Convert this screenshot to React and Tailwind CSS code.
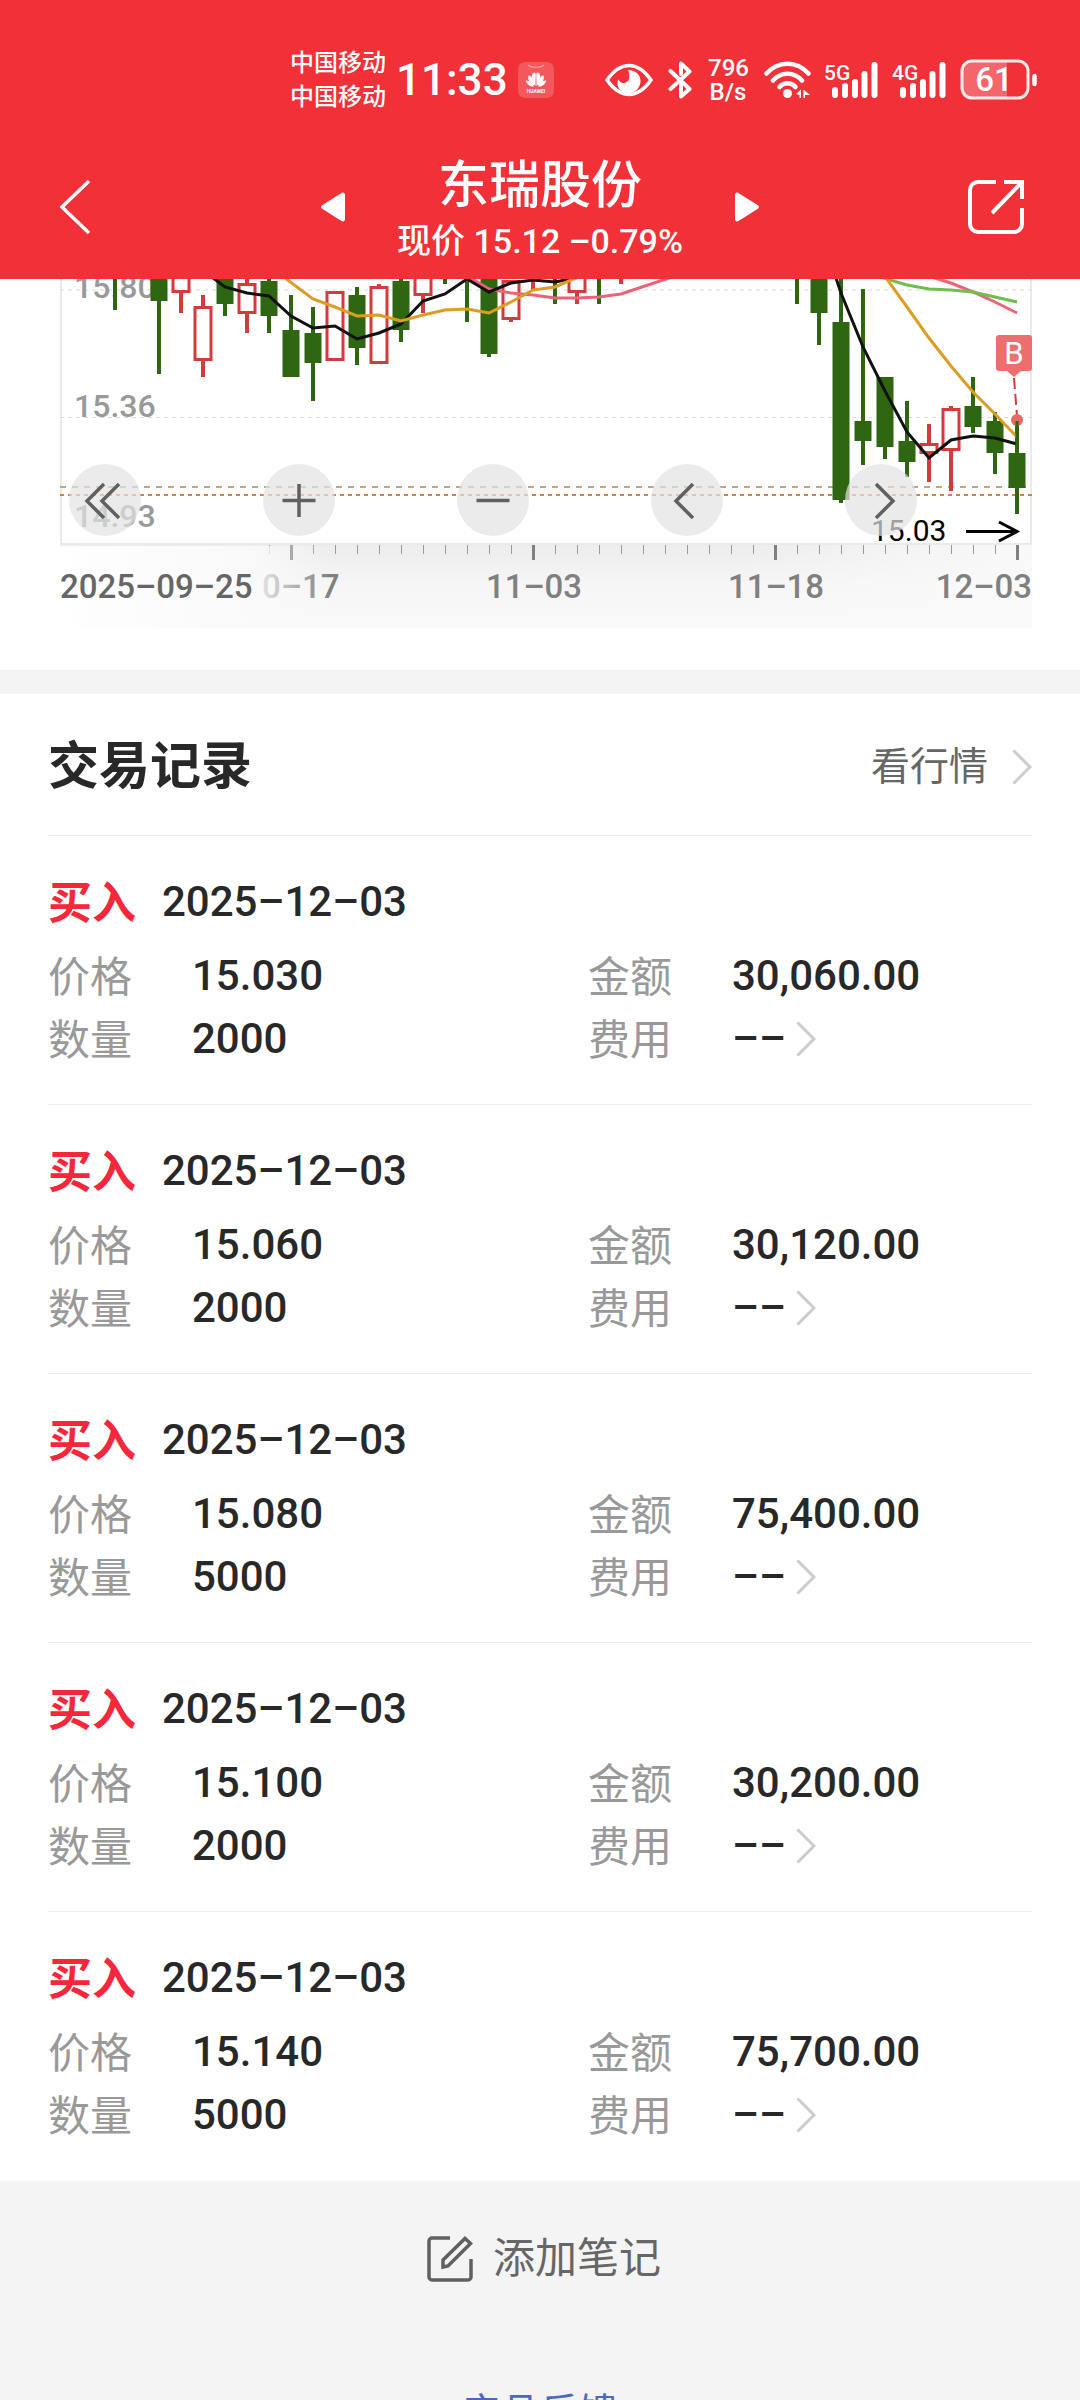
import React from 'react';

const trades = [
  { date: '2025–12–03', price: '15.030', amount: '30,060.00', count: '2000' },
  { date: '2025–12–03', price: '15.060', amount: '30,120.00', count: '2000' },
  { date: '2025–12–03', price: '15.080', amount: '75,400.00', count: '5000' },
  { date: '2025–12–03', price: '15.100', amount: '30,200.00', count: '2000' },
  { date: '2025–12–03', price: '15.140', amount: '75,700.00', count: '5000' },
];

// x, wick top, wick bottom, body top, body bottom, rising
const candles = [
  [115, 260, 310, 0, 0, false],
  [159, 260, 374, 260, 301, false],
  [181, 260, 313, 260, 293, true],
  [203, 295, 377, 306, 361, true],
  [225, 260, 316, 260, 304, false],
  [247, 260, 333, 283, 314, true],
  [269, 260, 333, 281, 316, false],
  [291, 295, 377, 330, 377, false],
  [313, 307, 401, 333, 363, false],
  [335, 291, 361, 291, 361, true],
  [357, 287, 365, 295, 348, false],
  [379, 284, 364, 286, 364, true],
  [401, 260, 342, 281, 330, false],
  [423, 260, 313, 260, 296, true],
  [445, 260, 284, 0, 0, false],
  [467, 260, 322, 0, 0, false],
  [489, 260, 357, 260, 354, false],
  [511, 280, 322, 280, 320, true],
  [533, 260, 290, 0, 0, true],
  [555, 260, 304, 0, 0, false],
  [577, 260, 304, 260, 293, true],
  [599, 260, 304, 0, 0, false],
  [621, 260, 284, 0, 0, true],
  [797, 260, 304, 0, 0, false],
  [819, 260, 345, 260, 313, false],
  [841, 260, 503, 322, 500, false],
  [863, 289, 465, 421, 441, false],
  [885, 377, 459, 377, 447, false],
  [907, 401, 477, 441, 462, false],
  [929, 424, 482, 443, 454, true],
  [951, 406, 491, 408, 451, true],
  [973, 377, 433, 406, 427, false],
  [995, 412, 474, 421, 453, false],
  [1017, 421, 514, 453, 488, false],
];

const averages = [
  ['#ea6478', '464,274 489,289 511,293 533,295 555,298 577,298 599,297 621,294 645,286 672,277'],
  ['#ea6478', '928,276 951,283 973,292 995,302 1017,313'],
  ['#6fbf4b', '880,277 907,285 929,289 951,290 973,292 995,297 1017,302'],
  ['#111', '205,272 225,287 247,293 269,296 291,316 313,328 335,326 357,339 379,333 401,324 423,301 445,294 467,279 489,292 511,283 533,280 555,282 580,277'],
  ['#111', '834,272 841,293 863,347 885,391 907,432 929,458 951,440 973,436 995,438 1017,444'],
  ['#dd9d22', '281,275 313,299 335,307 357,316 379,315 401,321 423,315 445,310 467,309 489,313 511,302 533,290 555,287 578,277'],
  ['#dd9d22', '884,275 907,307 929,338 951,366 973,392 995,414 1017,437'],
];

const ticks = Array.from({ length: 35 }, (_, i) => 269 + i * 22);
const majorTicks = [291, 533, 775, 1017];

const Candle = ({ data }) => {
  const [x, high, low, top, bottom, rising] = data;
  const color = rising ? '#d23c3c' : '#2e6612';
  return (
    <g>
      <line x1={x} x2={x} y1={high} y2={low} stroke={color} strokeWidth="4" />
      {bottom > 0 && (
        <rect
          x={rising ? x - 8 : x - 8.5}
          y={rising ? top + 1.5 : top}
          width={rising ? 16 : 17}
          height={rising ? bottom - top - 3 : bottom - top}
          fill={rising ? '#fff' : color}
          stroke={rising ? color : 'none'}
          strokeWidth="3"
        />
      )}
    </g>
  );
};

const Chevron = ({ className }) => (
  <svg viewBox="0 0 20 36" fill="none" className={className}>
    <path d="M1.5 1.5 18 18 1.5 34.5" stroke="#ccc" strokeWidth="3" />
  </svg>
);

const Signal = ({ label }) => (
  <svg viewBox="0 0 54 40" className="w-[54px] h-10 overflow-visible" fill="none">
    <text x="0" y="20" fontSize="21" fontWeight="500" fill="#fff">
      {label}
    </text>
    <path d="M11 30v5M21 26v9M31 22v13M40.5 14v21M50.5 5v30" stroke="#fff" strokeWidth="6" strokeLinecap="round" />
  </svg>
);

const StatusBar = () => (
  <div className="flex items-center justify-between h-[106px] pl-[290px] pr-[42px] pt-[54px]">
    <div className="flex items-center">
      <div className="text-2xl leading-[34px] font-medium whitespace-nowrap">
        <div>中国移动</div>
        <div>中国移动</div>
      </div>
      <div className="ml-[10px] text-[44px] leading-[48px] font-medium">11:33</div>
      <svg viewBox="0 0 36 36" className="w-9 h-9 ml-[10px]">
        <rect width="36" height="36" rx="7" fill="#f4585c" />
        <path d="M10 3c3 3 13 3 16 0" fill="none" stroke="#f9a3a0" strokeWidth="1.2" />
        <g fill="#fff">
          <path d="M17.5 24c-4-5-5-10-2.5-13 1.5-1 2.5-.5 2.700 1zM18.5 24c4-5 5-10 2.5-13-1.5-1-2.5-.5-2.700 1z" />
          <path d="M16.5 24c-5-3-7-6-6-10.5 3-.5 5 5 6 10.5zM19.5 24c5-3 7-6 6-10.5-3-.5-5 5-6 10.5z" />
          <path d="M15.8 24.5c-4 0-7-2-8-6 3-.5 6.5 3 8 6zM20.2 24.5c4 0 7-2 8-6-3-.5-6.5 3-8 6z" />
        </g>
        <text x="18" y="31" textAnchor="middle" fontSize="5" fontWeight="700" fill="#fff">HUAWEI</text>
      </svg>
    </div>
    <div className="flex items-center">
      <svg viewBox="0 0 48 34" className="w-12 h-[34px]">
        <path d="M2 17C9 7 16 2.500 24 2.500S39 7 46 17C39 27 32 31.500 24 31.500S9 27 2 17z" fill="none" stroke="#fff" strokeWidth="3.5" strokeLinejoin="round" />
        <path d="M23 7c8 0 12.500 5 12.500 11S31 30 24 30s-11.500-4-11.500-9.500c0-1.500.2-3 .8-4 1.500 2.500 3.200 3.500 5 3.500 3.500 0 6-2.500 6-6.500 0-2.500-.3-4.500-1.300-6.500z" fill="#fff" />
      </svg>
      <svg viewBox="0 0 24 38" className="w-6 h-[38px] ml-[15px]" fill="none" stroke="#fff" strokeWidth="4" strokeLinecap="round" strokeLinejoin="round">
        <path d="M2.5 10 21.500 28 13 35.500V24M2.500 28 21.500 10.500 13 2.500V13" />
      </svg>
      <div className="ml-4 w-10 text-2xl leading-6 font-medium text-center">
        <div>796</div>
        <div>B/s</div>
      </div>
      <svg viewBox="0 0 48 38" className="w-12 h-[38px] ml-4" fill="none" stroke="#fff" strokeWidth="4.5" strokeLinecap="round">
        <path d="M2.5 12.500C14-.5 33-.5 44.500 12.500M9 19.500c8-9 21-9 29 0M15.500 26c4-5 12-5 16 0" />
        <circle cx="23.5" cy="32.5" r="4.5" fill="#fff" stroke="none" />
        <path d="M32 33l5-4.500V37h-1.500v-3zM39.500 28.500V37H41v-3h5z" fill="#fff" stroke="none" />
      </svg>
      <div className="flex gap-[14px] ml-[12px]">
        <Signal label="5G" />
        <Signal label="4G" />
      </div>
      <svg viewBox="0 0 78 42" className="w-[78px] h-[42px] ml-[14px]" fill="none">
        <path d="M12 3h35v36H12a10 10 0 0 1-10-10V13A10 10 0 0 1 12 3z" fill="#f4666b" />
        <rect x="2" y="2" width="66" height="37" rx="10" stroke="#fff" strokeOpacity="0.9" strokeWidth="3" />
        <path d="M74.5 17v8" stroke="#fff" strokeWidth="4.5" strokeLinecap="round" />
        <text x="34" y="32" textAnchor="middle" fontSize="33" fontWeight="500" fill="#fff">61</text>
      </svg>
    </div>
  </div>
);

const TitleBar = () => (
  <div className="flex items-center justify-between h-[173px] px-12 pt-[38px] pb-[10px]">
    <button type="button" aria-label="返回" className="w-24 h-24 pl-1 flex items-center">
      <svg viewBox="0 0 48 56" className="w-12 h-14" fill="none">
        <path d="M37 2 10 28l27 26" stroke="#fff" strokeWidth="3.5" />
      </svg>
    </button>
    <div className="flex items-center gap-[53px]">
      <button type="button" aria-label="上一只">
        <svg viewBox="0 0 24 32" className="w-6 h-8" fill="#fff">
          <path d="M20.5 2c2-1 3.500 0 3.500 2v24c0 2-1.500 3-3.500 2L1.500 18c-2-1.200-2-2.800 0-4z" />
        </svg>
      </button>
      <div className="w-[284px] pt-[10px] flex flex-col items-center text-center whitespace-nowrap">
        <h1 className="text-[51px] leading-[58px] font-medium">东瑞股份</h1>
        <p className="text-[34px] leading-[52px] font-medium">现价 15.12 –0.79%</p>
      </div>
      <button type="button" aria-label="下一只">
        <svg viewBox="0 0 24 32" className="w-6 h-8" fill="#fff">
          <path d="M3.5 2C1.500 1 0 2 0 4v24c0 2 1.500 3 3.500 2l19-12c2-1.200 2-2.800 0-4z" />
        </svg>
      </button>
    </div>
    <button type="button" aria-label="分享" className="w-24 h-24 flex items-center justify-end">
      <svg viewBox="0 0 64 56" className="w-16 h-14" fill="none" stroke="#fff" strokeWidth="4">
        <path d="M28 3H10a8 8 0 0 0-8 8v34a8 8 0 0 0 8 8h36a8 8 0 0 0 8-8V29M36 3h18v17M53 4 24 34" />
      </svg>
    </button>
  </div>
);

const chartButtons = [
  ['最早', 'M29 14 12 31l17 17M44 14 27 31l17 17'],
  ['放大', 'M30 14v33M13.5 30.5h33'],
  ['缩小', 'M13.5 30.5h33'],
  ['向左', 'M36 14 19 31l17 17'],
  ['向右', 'M25 14 42 31 25 48'],
];

const KLineChart = () => (
  <section className="relative bg-white pl-[60px] pr-12 pb-[42px]">
    <svg viewBox="60 279 972 349" className="block w-full" fill="none">
      <defs>
        <linearGradient id="axis" x1="0" y1="0" x2="0" y2="1">
          <stop offset="0" stopColor="#ececec" />
          <stop offset="0.5" stopColor="#f6f6f6" />
          <stop offset="1" stopColor="#fafafa" />
        </linearGradient>
        <linearGradient id="fadeRight">
          <stop offset="0" stopColor="#fafafa" stopOpacity="0" />
          <stop offset="1" stopColor="#fafafa" stopOpacity="0.9" />
        </linearGradient>
        <linearGradient id="fadeLeft">
          <stop offset="0" stopColor="#fff" />
          <stop offset="0.15" stopColor="#fdfdfd" />
          <stop offset="0.7" stopColor="#fafafa" stopOpacity="0.95" />
          <stop offset="1" stopColor="#fafafa" stopOpacity="0" />
        </linearGradient>
      </defs>

      <rect x="60" y="543" width="972" height="85" fill="url(#axis)" />
      <rect x="740" y="543" width="292" height="85" fill="url(#fadeRight)" />
      <path d="M61 279v265h970V279" stroke="#eaeaea" strokeWidth="2" />
      <path d="M60 290h972M60 417.5h972" stroke="#d9d9d9" strokeDasharray="4 4" />
      <path d="M60 487h972" stroke="#bfa67c" strokeWidth="2" strokeDasharray="6 6" />
      <path d="M60 495h972" stroke="#d4813f" strokeWidth="2" strokeDasharray="4 4" />

      <g fontSize="32" fontWeight="500" fill="#999">
        <text x="74" y="298">15.80</text>
        <text x="74" y="417">15.36</text>
        <text x="74" y="527">14.93</text>
      </g>

      {candles.map((data) => (
        <Candle key={data[0]} data={data} />
      ))}
      {averages.map(([color, points], idx) => (
        <polyline key={idx} points={points} stroke={color} strokeWidth="3" />
      ))}

      {ticks.map((x) => (
        <line key={x} x1={x + 0.5} x2={x + 0.5} y1="545" y2="554" stroke="#999" />
      ))}
      {majorTicks.map((x) => (
        <line key={x} x1={x + 0.5} x2={x + 0.5} y1="545" y2="560" stroke="#808080" strokeWidth="3" />
      ))}
      <g fontSize="33" fontWeight="500" fill="#808080" textAnchor="middle">
        <text x="262" y="598" textAnchor="start">0–17</text>
        <text x="534" y="598">11–03</text>
        <text x="776" y="598">11–18</text>
        <text x="1032" y="598" textAnchor="end">12–03</text>
      </g>
      <rect x="60" y="546" width="270" height="82" fill="url(#fadeLeft)" />
      <line x1="291.5" x2="291.5" y1="545" y2="560" stroke="#aaa" strokeWidth="3" />
      <text x="60" y="598" fontSize="33" fontWeight="500" fill="#666">2025–09–25</text>

      <text x="871" y="541" fontSize="30" fill="#000">15.03</text>
      <path d="M966 531.5h49M999 522l18 9.5-18 9.5" stroke="#000" strokeWidth="3" />

      <path d="M1014 378l3 38" stroke="#d23c3c" strokeWidth="2" strokeDasharray="11 5" />
      <circle cx="1017" cy="420" r="6" fill="#e46a6a" />
      <path d="M1017 421v32" stroke="#2e6612" strokeWidth="3" />
      <path d="M999 335h30a3 3 0 0 1 3 3v30a3 3 0 0 1-3 3h-8l-7 6-7-6h-8a3 3 0 0 1-3-3v-30a3 3 0 0 1 3-3z" fill="#ee6d6f" />
      <text x="1014" y="364" textAnchor="middle" fontSize="31" fill="#fff">B</text>
    </svg>
    <div className="absolute left-[69px] top-[185px] flex gap-[122px]">
      {chartButtons.map(([name, d]) => (
        <button
          key={name}
          type="button"
          aria-label={name}
          className="w-[72px] h-[72px] rounded-full bg-[#e3e3e3]/70 flex items-center justify-center"
        >
          <svg viewBox="0 0 60 61" className="w-[60px] h-[61px]" fill="none">
            <path d={d} stroke="#606060" strokeWidth="3.5" />
          </svg>
        </button>
      ))}
    </div>
  </section>
);

const Field = ({ label, children }) => (
  <div className="flex items-center h-[63px] pl-12">
    <dt className="w-36 pt-1 text-[42px] leading-[58px] text-[#999]">{label}</dt>
    <dd className="flex items-center text-[42px] leading-[63px] font-medium text-[#282828]">{children}</dd>
  </div>
);

const TradeItem = ({ trade }) => (
  <li className="group">
    <div className="flex items-center gap-[26px] px-12 pt-[38px]">
      <span className="pt-1 text-[44px] leading-[52px] font-bold text-[#f5273b]">买入</span>
      <span className="text-[42px] leading-[56px] font-medium text-[#282828]">{trade.date}</span>
    </div>
    <dl className="grid grid-cols-2 pt-[14px] pb-[34px]">
      <Field label="价格">{trade.price}</Field>
      <Field label="金额">{trade.amount}</Field>
      <Field label="数量">{trade.count}</Field>
      <Field label="费用">
        <a href="#fee" className="flex items-center gap-[10px]">
          ––
          <Chevron className="w-5 h-9" />
        </a>
      </Field>
    </dl>
    <div className="mx-12 border-b border-[#eee] group-last:border-white" />
  </li>
);

const App = () => {
  return (
    <div className="h-screen overflow-hidden bg-[#f4f4f4] font-['Roboto','Noto_Sans_CJK_SC',sans-serif]">
      <header className="bg-[#f23038] text-white">
        <StatusBar />
        <TitleBar />
      </header>
      <main>
        <KLineChart />
        <section className="mt-6 bg-white">
          <div className="mx-12 pt-1 flex items-center justify-between h-[142px] border-b border-[#eee]">
            <h2 className="text-[51px] leading-[60px] font-bold text-[#282828]">交易记录</h2>
            <a href="#quote" className="flex items-center gap-6 text-[39px] leading-[60px] text-[#666]">
              看行情
              <Chevron className="w-5 h-9" />
            </a>
          </div>
          <ul>
            {trades.map((trade, idx) => (
              <TradeItem key={idx} trade={trade} />
            ))}
          </ul>
        </section>
        <div className="flex flex-col items-center pt-12">
          <button type="button" className="flex items-center gap-5 pl-2 text-[42px] leading-[60px] text-[#666]">
            <svg viewBox="0 0 46 46" className="w-[46px] h-[46px]" fill="none" stroke="#606060" strokeWidth="3.5">
              <path d="M23 2H5a3 3 0 0 0-3 3v36a3 3 0 0 0 3 3h36a3 3 0 0 0 3-3V23" />
              <path d="M16 31v-7L38 2.500l5.500 5L21 30z" />
            </svg>
            添加笔记
          </button>
          <a href="#feedback" className="mt-24 text-[39px] leading-[56px] text-[#4a68c4]">产品反馈</a>
        </div>
      </main>
    </div>
  );
};

export default App;
